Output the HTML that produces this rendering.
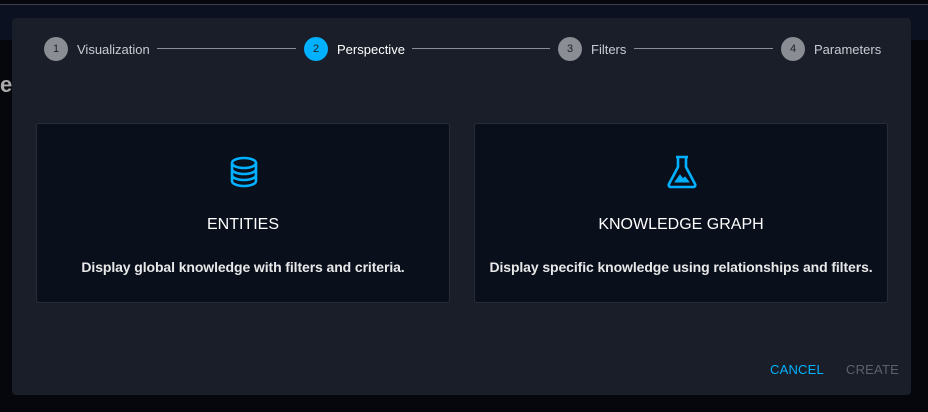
<!DOCTYPE html>
<html><head><style>
body{margin:0;width:928px;height:412px;background:#05070d;font-family:"Liberation Sans",sans-serif;position:relative;overflow:hidden}
.topline{position:absolute;left:0;top:4px;width:928px;height:1px;background:#3a3f4a}
.toolbar{position:absolute;left:0;top:5px;width:928px;height:35px;background:#0b1120}
.dlg{position:absolute;left:12px;top:18px;width:899px;height:377px;background:#1a1e29;border-radius:4px}
.step{position:absolute;top:37px;height:24px;display:flex;align-items:center;font-size:13px;color:#c9ccd2}
.c{width:24px;height:24px;border-radius:50%;background:#8a8d94;color:#222;font-size:11px;display:flex;align-items:center;justify-content:center;margin-right:9px}
.line{position:absolute;top:48px;height:1px;background:#8a8d94}
.card{position:absolute;top:123px;width:412px;height:178px;background:#0a0f1c;border:1px solid #272c38;border-radius:3px;text-align:center;color:#fff}
.t{position:absolute;top:92px;width:100%;font-size:16px}
.d{position:absolute;top:135px;width:100%;font-size:14px;font-weight:bold;color:#e8e8e8;letter-spacing:-0.1px}
.btn{position:absolute;top:362px;font-size:13px;letter-spacing:0.2px}
</style></head><body>
<div class="topline"></div><div class="toolbar"></div>
<div style="position:absolute;left:0;top:72px;color:#aaa;font-size:22px;font-weight:bold">e</div>
<div class="dlg"></div>
<div class="step" style="left:44px"><div class="c">1</div>Visualization</div>
<div class="line" style="left:157px;width:139px"></div>
<div class="step" style="left:304px;color:#fff"><div class="c" style="background:#00b1ff">2</div>Perspective</div>
<div class="line" style="left:412px;width:138px"></div>
<div class="step" style="left:558px"><div class="c">3</div>Filters</div>
<div class="line" style="left:634px;width:139px"></div>
<div class="step" style="left:781px"><div class="c">4</div>Parameters</div>
<div class="card" style="left:36px">
<svg style="position:absolute;left:192px;top:32px" width="30" height="32" viewBox="0 0 30 32" fill="none" stroke="#00b1ff" stroke-width="2.6"><ellipse cx="15" cy="7" rx="12" ry="5"/><path d="M3 7v18c0 2.8 5.4 5 12 5s12-2.2 12-5V7M3 13c0 2.8 5.4 5 12 5s12-2.2 12-5M3 19c0 2.8 5.4 5 12 5s12-2.2 12-5"/></svg>
<div class="t">ENTITIES</div><div class="d">Display global knowledge with filters and criteria.</div></div>
<div class="card" style="left:474px">
<svg style="position:absolute;left:191px;top:31px" width="32" height="34" viewBox="0 0 32 34" fill="none" stroke="#00b1ff" stroke-width="2.6" stroke-linejoin="round"><path d="M10 2h12M12 2v10L3 29c-.8 1.6.2 3 2 3h22c1.8 0 2.8-1.4 2-3L20 12V2"/><path d="M9 27l5-7 3 4 2-2 4 5z" fill="#00b1ff" stroke-width="1"/></svg>
<div class="t">KNOWLEDGE GRAPH</div><div class="d">Display specific knowledge using relationships and filters.</div></div>
<div class="btn" style="left:770px;color:#00b1ff">CANCEL</div>
<div class="btn" style="left:846px;color:#5d6069">CREATE</div>
</body></html>
